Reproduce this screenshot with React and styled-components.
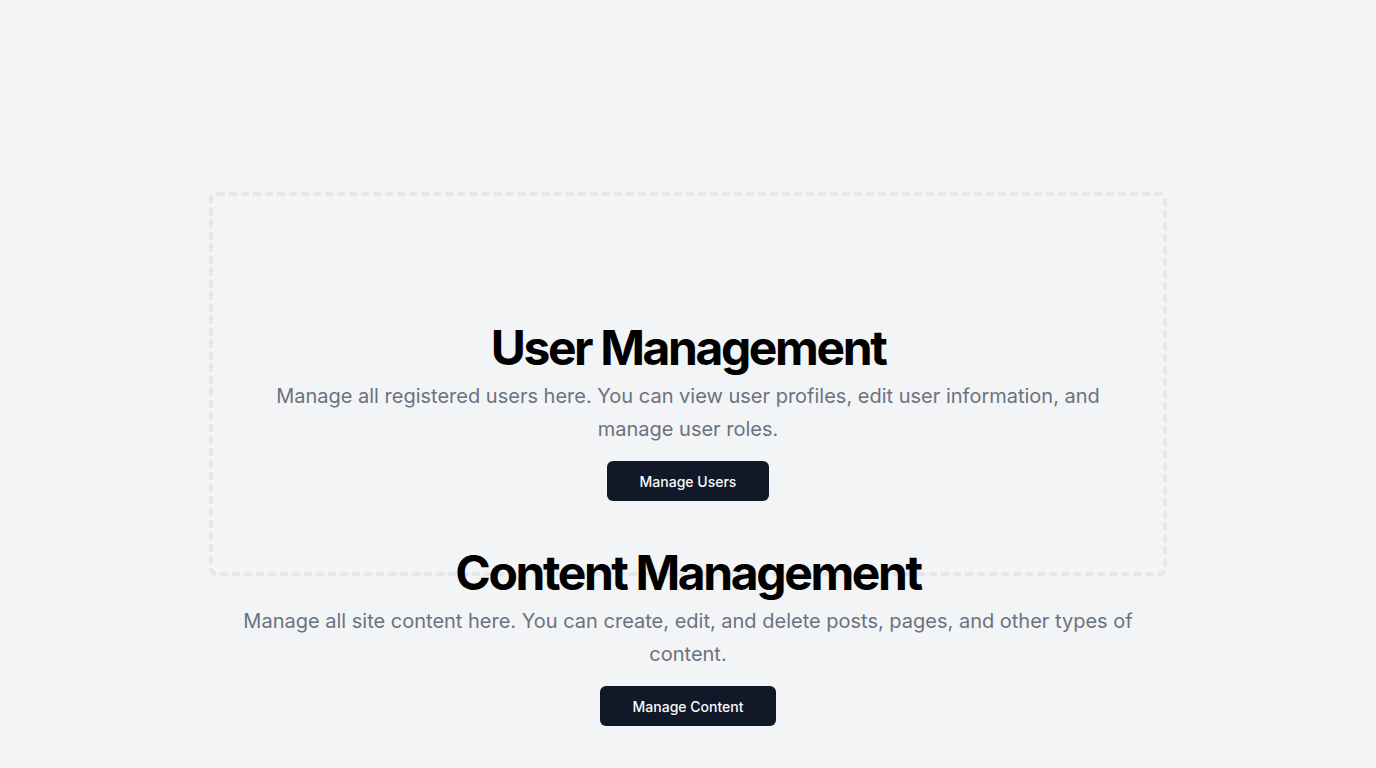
import styled, { createGlobalStyle } from "styled-components";

const GlobalStyle = createGlobalStyle`
  html, body {
    margin: 0;
    padding: 0;
    background: #f3f4f6;
    font-family: Inter, "Noto Sans", sans-serif;
  }
  * {
    box-sizing: border-box;
  }
`;

const Page = styled.div`
  min-height: 100vh;
  display: flex;
  align-items: center;
  justify-content: center;
`;

const Board = styled.div`
  width: 958px;
  height: 384px;
  border: 4px dashed #e5e7eb;
  border-radius: 8px;
  padding-top: 128px;
  display: flex;
  flex-direction: column;
  align-items: center;
  gap: 48px;
`;

const Section = styled.section`
  display: flex;
  flex-direction: column;
  align-items: center;
  text-align: center;
  max-width: 896px;
`;

const Title = styled.h2`
  margin: 0 0 8px;
  font-size: 48px;
  line-height: 1;
  font-weight: 700;
  letter-spacing: -0.05em;
  color: #000;
`;

const Text = styled.p`
  margin: 0 0 16px;
  font-size: 20px;
  line-height: 32.5px;
  color: #6b7280;
`;

const Button = styled.button`
  height: 40px;
  padding: 0 33px;
  border: none;
  border-radius: 6px;
  background: #111827;
  color: #f9fafb;
  font-family: inherit;
  font-size: 14px;
  font-weight: 500;
  cursor: pointer;
`;

const sections = [
  {
    title: "User Management",
    text: "Manage all registered users here. You can view user profiles, edit user information, and manage user roles.",
    action: "Manage Users",
  },
  {
    title: "Content Management",
    text: "Manage all site content here. You can create, edit, and delete posts, pages, and other types of content.",
    action: "Manage Content",
  },
];

export default function App() {
  return (
    <>
      <GlobalStyle />
      <Page>
        <Board>
          {sections.map((s) => (
            <Section key={s.title}>
              <Title>{s.title}</Title>
              <Text>{s.text}</Text>
              <Button>{s.action}</Button>
            </Section>
          ))}
        </Board>
      </Page>
    </>
  );
}
